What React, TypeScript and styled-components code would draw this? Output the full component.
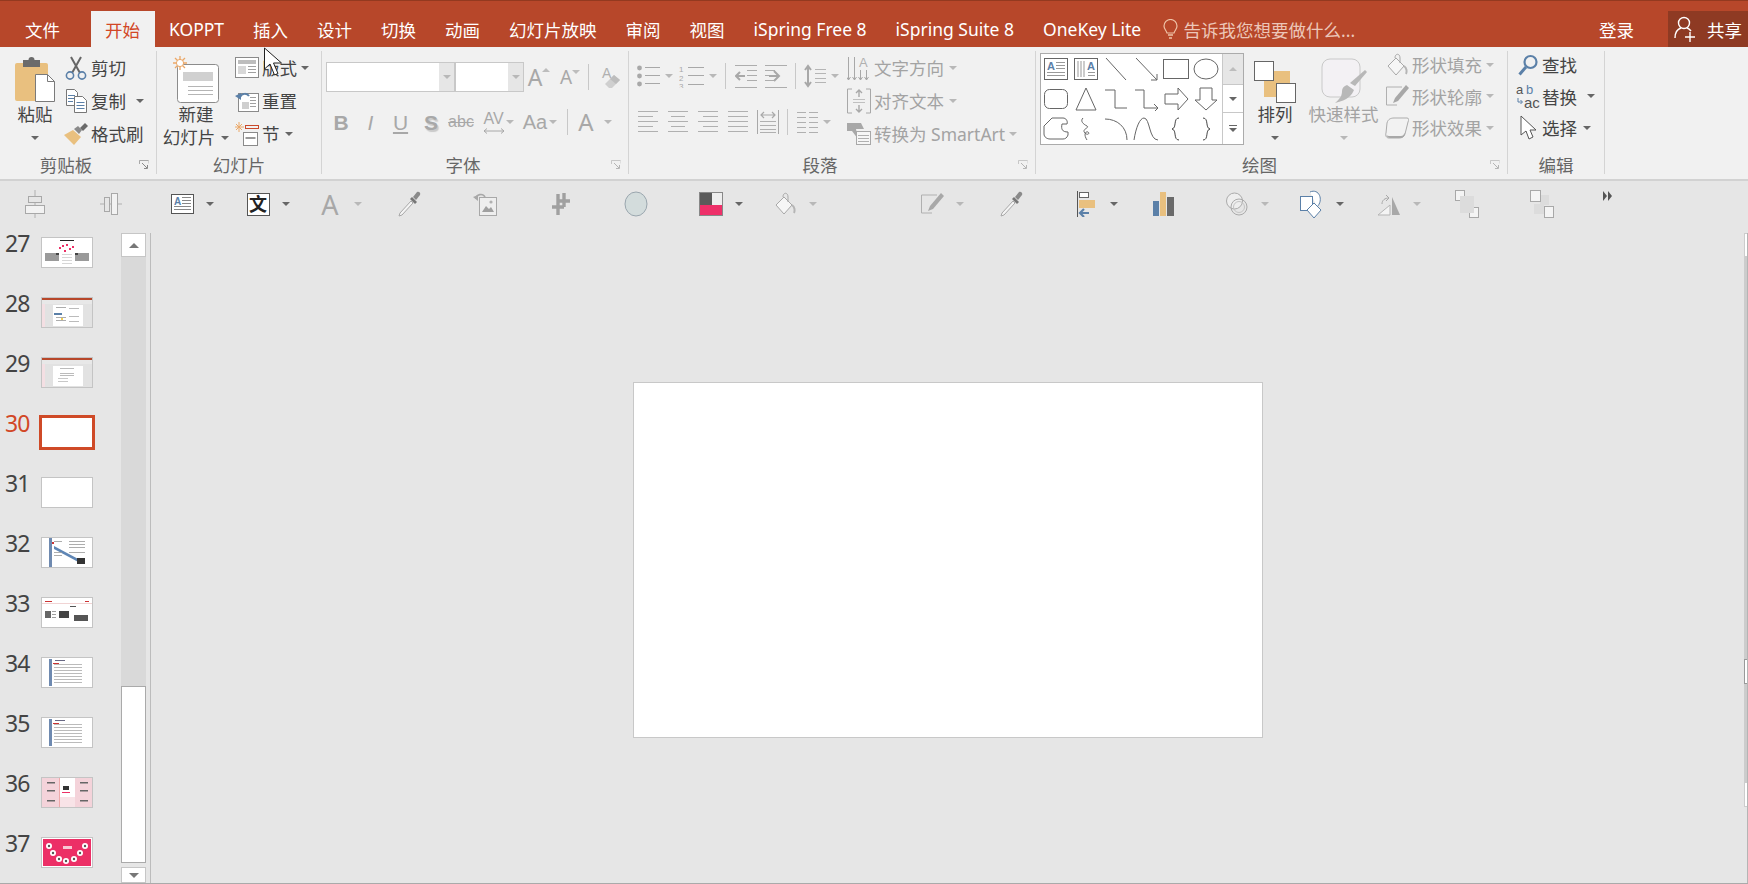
import React from "react";
import styled, { createGlobalStyle } from "styled-components";

const FONT = `"Noto Sans", "Noto Sans CJK SC", sans-serif`;
const G = "#b2b2b2";
const D = "#6a6a6a";
const B = "#5b80a8";
const Y = "#e9c07f";

const Global = createGlobalStyle`
  html, body { margin: 0; padding: 0; background: #e6e6e6; }
  * { box-sizing: border-box; }
  body { font-family: ${FONT}; }
`;

const Page = styled.div`
  position: relative; width: 1748px; height: 884px; overflow: hidden;
  display: flex; flex-direction: column; background: #e6e6e6;
  border-bottom: 1px solid #aaa;
`;
const TitleBar = styled.header`
  height: 47px; flex: none; display: flex; align-items: flex-end; padding-left: 10.5px;
  background: #b7472a; border-top: 1px solid #93391f; color: #fff; font-size: 17.5px;
`;
const Tab = styled.div<{ $active?: boolean; $mr?: number }>`
  height: 36px; padding: 0 14.5px; display: flex; align-items: center; white-space: nowrap;
  margin-right: ${(p) => p.$mr ?? 0}px;
  background: ${(p) => (p.$active ? "#f1f1f1" : "transparent")};
  color: ${(p) => (p.$active ? "#d24726" : "#fff")};
`;
const Search = styled.div`
  height: 36px; margin-left: 7px; display: flex; align-items: center; gap: 6px;
  color: #ecc6b8; white-space: nowrap;
`;
const Spacer = styled.div`flex: 1;`;
const Login = styled.div`height: 36px; display: flex; align-items: center; margin-right: 34px;`;
const Share = styled.div`
  width: 80px; height: 36px; background: #8e3a23; display: flex; align-items: center;
  padding-left: 6px; gap: 11px;
`;

const Ribbon = styled.section`
  height: 134px; flex: none; display: flex; padding: 4px 0 5px;
  background: #f1f1f1; border-bottom: 2px solid #d2d2d2;
  font-size: 17.5px; color: #444;
`;
const Group = styled.div<{ $w: number }>`
  width: ${(p) => p.$w}px; flex: none; display: flex; flex-direction: column;
  border-right: 1px solid #d4d4d4;
`;
const GroupBody = styled.div<{ $pl?: number }>`
  flex: 1; min-height: 0; display: flex; padding-left: ${(p) => p.$pl ?? 0}px;
`;
const GroupFooter = styled.div`
  height: 18px; flex: none; display: flex; align-items: center; color: #666; line-height: 18px;
`;
const GroupLabel = styled.div`flex: 1; text-align: center;`;
const Launcher = styled.div`width: 24px; display: flex; justify-content: center;`;

const BigButton = styled.div<{ $w: number; $ml?: number; $dim?: boolean }>`
  width: ${(p) => p.$w}px; margin-left: ${(p) => p.$ml ?? 0}px; flex: none;
  display: flex; flex-direction: column; align-items: center;
  color: ${(p) => (p.$dim ? "#a3a3a3" : "#444")};
`;
const BigIcon = styled.div`height: 52px; display: flex; align-items: flex-end; justify-content: center;`;
const BigLine = styled.div`
  height: 23px; line-height: 23px; display: flex; align-items: center; white-space: nowrap;
`;
const SmallCol = styled.div<{ $ml?: number; $mt?: number }>`
  display: flex; flex-direction: column; flex: none;
  margin-left: ${(p) => p.$ml ?? 0}px; margin-top: ${(p) => p.$mt ?? 0}px;
`;
const SmallRow = styled.div<{ $h?: number; $dim?: boolean }>`
  height: ${(p) => p.$h ?? 33}px; display: flex; align-items: center; white-space: nowrap;
  color: ${(p) => (p.$dim ? "#a3a3a3" : "#444")};
`;
const RowIcon = styled.span<{ $w?: number; $gap?: number }>`
  width: ${(p) => p.$w ?? 24}px; margin-right: ${(p) => p.$gap ?? 3}px; flex: none;
  display: flex; align-items: center; justify-content: center;
`;
const Caret = styled.span<{ $ml?: number; $dim?: boolean }>`
  display: inline-block; flex: none; width: 0; height: 0;
  margin-left: ${(p) => p.$ml ?? 0}px;
  border-left: 4px solid transparent; border-right: 4px solid transparent;
  border-top: 4.5px solid ${(p) => (p.$dim ? "#b8b8b8" : "#666")};
`;
const StackCol = styled.div<{ $w?: number }>`
  display: flex; flex-direction: column; flex: none; ${(p) => (p.$w ? `width:${p.$w}px;` : "")}
`;
const ToolRow = styled.div<{ $mt: number; $h?: number }>`
  margin-top: ${(p) => p.$mt}px; height: ${(p) => p.$h ?? 30}px;
  display: flex; align-items: center; flex: none; white-space: nowrap;
`;
const Spot = styled.span<{ $ml?: number; $w?: number }>`
  display: inline-flex; flex: none; align-items: center; justify-content: center;
  margin-left: ${(p) => p.$ml ?? 0}px; ${(p) => (p.$w ? `width:${p.$w}px;` : "")}
`;
const Sep = styled.span<{ $ml: number }>`
  width: 1px; height: 26px; background: #c8c8c8; flex: none; margin-left: ${(p) => p.$ml}px;
`;
const Combo = styled.div<{ $w: number; $ml?: number }>`
  width: ${(p) => p.$w}px; height: 30px; margin-left: ${(p) => p.$ml ?? 0}px; flex: none;
  display: flex; justify-content: flex-end; background: #fff; border: 1px solid #c8c8c8;
`;
const ComboArrow = styled.div`
  width: 15px; background: #e6e6e6; display: flex; align-items: center; justify-content: center;
`;
const Letter = styled.span<{ $size: number; $bold?: boolean; $italic?: boolean; $deco?: string; $shadow?: boolean; $font?: string }>`
  font-family: ${(p) => p.$font ?? `"Liberation Sans", sans-serif`};
  font-size: ${(p) => p.$size}px; line-height: 1; color: #a8a8a8;
  font-weight: ${(p) => (p.$bold ? 700 : 400)};
  font-style: ${(p) => (p.$italic ? "italic" : "normal")};
  text-decoration: ${(p) => p.$deco ?? "none"};
  ${(p) => (p.$shadow ? "text-shadow: 1.5px 1.5px 1px #c9c9c9;" : "")}
`;
const StackedLetter = styled.span`display: inline-flex; flex-direction: column; align-items: center; gap: 1px;`;

const Gallery = styled.div`
  margin-top: 2px; width: 204px; height: 92px; flex: none; display: flex;
  border: 1px solid #ababab; background: #fff;
`;
const GalleryGrid = styled.div`
  width: 181px; display: grid; padding: 0 0 0 0;
  grid-template-columns: repeat(6, 30px); grid-template-rows: repeat(3, 30px);
  justify-items: center; align-items: center;
`;
const GalleryScroll = styled.div`
  flex: 1; display: flex; flex-direction: column; border-left: 1px solid #c8c8c8;
`;
const GalleryBtn = styled.div<{ $on?: boolean; $h: number }>`
  height: ${(p) => p.$h}px; flex: none; display: flex; align-items: center; justify-content: center;
  background: ${(p) => (p.$on ? "#e6e6e6" : "#fff")}; border-bottom: 1px solid #c8c8c8;
  &:last-child { border-bottom: none; }
`;
const UpTri = styled.span`
  width: 0; height: 0; border-left: 4px solid transparent; border-right: 4px solid transparent;
  border-bottom: 4.5px solid #bdbdbd;
`;

const ToolBar = styled.div`
  height: 52px; flex: none; display: flex; align-items: center;
  padding: 0 0 6px 15px; background: #e6e6e6;
`;
const ToolSlot = styled.div<{ $w: number; $up?: boolean }>`
  width: ${(p) => p.$w}px; flex: none; display: flex; align-items: center;
  ${(p) => (p.$up ? "margin-top: -16px;" : "")}
`;
const ToolIcon = styled.div`width: 40px; flex: none; display: flex; justify-content: center; align-items: center;`;
const WenBox = styled.div`
  width: 23px; height: 23px; background: #fff; border: 1px solid #555; color: #222;
  display: flex; align-items: center; justify-content: center;
  font-size: 18px; font-weight: 700; line-height: 1;
`;

const Main = styled.main`flex: 1; min-height: 0; display: flex;`;
const ThumbPanel = styled.aside`
  width: 151px; flex: none; display: flex; border-right: 1px solid #bcbcbc;
`;
const ThumbList = styled.div`width: 121px; flex: none; overflow: hidden; padding-top: 4px;`;
const ThumbRow = styled.div`height: 60px; display: flex; align-items: flex-start;`;
const ThumbNum = styled.div<{ $active?: boolean }>`
  width: 41px; flex: none; padding-left: 5px; font-size: 23px; line-height: 24px;
  letter-spacing: -1px; margin-top: -6px;
  color: ${(p) => (p.$active ? "#d24726" : "#444")};
`;
const Thumb = styled.div<{ $active?: boolean }>`
  width: 52px; height: 31px; background: #fff; border: 1px solid #c4c4c4; overflow: hidden;
  ${(p) => (p.$active ? "outline: 3px solid #cf4a27; outline-offset: -1px;" : "")}
`;
const Scroll = styled.div`
  width: 25px; flex: none; display: flex; flex-direction: column; background: #d9d9d9;
`;
const ScrollBtn = styled.div<{ $h: number }>`
  height: ${(p) => p.$h}px; flex: none; background: #fff; border: 1px solid #c6c6c6;
  display: flex; align-items: center; justify-content: center;
`;
const ScrollTrack = styled.div`flex: 1;`;
const ScrollThumb = styled.div`height: 177px; flex: none; background: #fff; border: 1px solid #aaa;`;
const ScrollGap = styled.div`height: 4px; flex: none; background: #e6e6e6;`;
const TriUp = styled.span`
  width: 0; height: 0; border-left: 5.5px solid transparent; border-right: 5.5px solid transparent;
  border-bottom: 5.5px solid #777;
`;
const TriDown = styled.span`
  width: 0; height: 0; border-left: 5.5px solid transparent; border-right: 5.5px solid transparent;
  border-top: 5.5px solid #777;
`;
const Canvas = styled.div`
  flex: 1; display: flex; align-items: center; justify-content: center; padding-top: 4px;
`;
const Slide = styled.div`
  width: 630px; height: 356px; background: #fff; border: 1px solid #c8c8c8;
`;
const Rail = styled.div`
  width: 4px; flex: none; display: flex; flex-direction: column; border-right: 1px solid #b5b5b5;
`;
const RailBox = styled.div<{ $h: number; $dark?: boolean }>`
  height: ${(p) => p.$h}px; flex: none; background: #fff;
  border: 1px solid ${(p) => (p.$dark ? "#999" : "#ccc")}; border-right: none;
`;
const RailTrack = styled.div<{ $h?: number; $empty?: boolean }>`
  ${(p) => (p.$h ? `height:${p.$h}px;` : "flex:1;")}
  background: ${(p) => (p.$empty ? "transparent" : "#ccc")};
`;
const Cursor = styled.svg`position: absolute; left: 263px; top: 47px; z-index: 5;`;

/* ---------- icons ---------- */
type SP = { w: number; h: number; children: React.ReactNode; vb?: string };
const Svg = ({ w, h, children, vb }: SP) => (
  <svg width={w} height={h} viewBox={vb ?? `0 0 ${w} ${h}`} fill="none" style={{ display: "block", flex: "none" }}>
    {children}
  </svg>
);
const lines = (x1: number, x2: number, ys: number[], c: string, sw = 1) =>
  ys.map((y) => <line key={`${x1}-${y}`} x1={x1} x2={x2} y1={y + 0.5} y2={y + 0.5} stroke={c} strokeWidth={sw} />);

const Launch = ({ c = "#8a8a8a" }: { c?: string }) => (
  <Svg w={10} h={10}>
    <path d="M0.5 4V.5H9.5" stroke={c} transform="translate(0 0)" opacity=".7" />
    <path d="M3 3l5 5M5 8.5h3.5V5" stroke={c} />
    <path d="M9.5 .5v3" stroke={c} opacity=".3" />
  </Svg>
);
const Paste = () => (
  <Svg w={42} h={46}>
    <rect x="1" y="6" width="33" height="38" rx="2" fill={Y} />
    <rect x="9" y="3" width="17" height="7" fill="#6b6b6b" />
    <circle cx="17.5" cy="3" r="3" fill="#6b6b6b" />
    <path d="M21.5 17.5h12l7 7v20h-19z" fill="#fff" stroke="#7a7a7a" />
    <path d="M33.5 17.5v7h7" stroke="#7a7a7a" />
  </Svg>
);
const Scissors = () => (
  <Svg w={22} h={24}>
    <path d="M6 1l9 16M16 1L7 17" stroke="#666" strokeWidth="2" />
    <circle cx="5" cy="19.5" r="3.6" stroke={B} strokeWidth="1.6" />
    <circle cx="17" cy="19.5" r="3.6" stroke={B} strokeWidth="1.6" />
  </Svg>
);
const Copy = () => (
  <Svg w={22} h={24}>
    <path d="M1.5.5h8l3 3v13h-11z" fill="#fff" stroke="#777" />
    <path d="M3 6.5h7M3 9.5h7M3 12.5h5" stroke={B} />
    <path d="M9.5 7.5h8l4 4v12h-12z" fill="#fff" stroke="#777" />
    <path d="M11.5 13.5h8M11.5 16.5h8M11.5 19.5h8" stroke={B} />
  </Svg>
);
const Painter = () => (
  <Svg w={24} h={22}>
    <path d="M0 12l9-5 8 7-7 8z" fill={Y} />
    <path d="M11 6l4-3 4 4-3 4z" fill="#8a8a8a" transform="translate(-1 0)" />
    <path d="M16 5l5-5 3 3-5 5z" fill="#6a6a6a" />
  </Svg>
);
const NewSlide = () => (
  <Svg w={48} h={48}>
    <rect x="5.5" y="9.5" width="41" height="38" rx="3" fill="#fff" stroke="#8c8c8c" />
    <rect x="11" y="17" width="30" height="9" fill="#d0d0d0" />
    {lines(16, 41, [31, 35, 39], "#b5b5b5")}
    <path d="M8 1v14M1 8h14M3 3l10 10M13 3L3 13" stroke="#eba868" strokeWidth="1.3" />
    <circle cx="8" cy="8" r="3.6" fill="#fff" stroke="#eba868" />
  </Svg>
);
const Layout = () => (
  <Svg w={24} h={21}>
    <rect x=".5" y=".5" width="23" height="20" fill="#fff" stroke="#8a8a8a" />
    <rect x="3" y="3" width="18" height="4" fill="#bdbdbd" />
    <rect x="3" y="9" width="8" height="8" fill="#d8d8d8" />
    {lines(13, 21, [9, 12, 15], "#a0a0a0")}
  </Svg>
);
const Reset = () => (
  <Svg w={24} h={22}>
    <rect x="3.5" y="3.5" width="20" height="18" fill="#fff" stroke="#8a8a8a" />
    <rect x="7" y="12" width="7" height="7" fill="#cfcfcf" />
    {lines(15, 21, [7, 10, 13, 16], "#a0a0a0")}
    <path d="M5 7c2-4 7-4 9-1" stroke={B} strokeWidth="2" />
    <path d="M0 6l6-3v7z" fill={B} />
  </Svg>
);
const Section = () => (
  <Svg w={24} h={24}>
    <path d="M4 0v10M0 5h9M1 2l6 6M7 2L1 8" stroke="#eba868" />
    <rect x="10.5" y="3.5" width="13" height="3" stroke="#c9492b" />
    <rect x="8.5" y="10.5" width="14" height="13" fill="#fff" stroke="#8a8a8a" />
    <rect x="10.5" y="15" width="10" height="2" fill="#999" />
  </Svg>
);
const Up = ({ c = "#bdbdbd" }: { c?: string }) => (
  <Svg w={8} h={4}><path d="M0 4l4-4 4 4z" fill={c} /></Svg>
);
const GrowA = ({ s, down }: { s: number; down?: boolean }) => (
  <Spot $w={20}>
    <Letter $size={s} $font={FONT}>A</Letter>
    <span style={{ alignSelf: "flex-start", marginTop: 2, transform: down ? "scaleY(-1)" : "none" }}><Up /></span>
  </Spot>
);
const Eraser = () => (
  <Svg w={20} h={24}>
    <text x="1" y="13" fontSize="14" fill="#b0b0b0" fontFamily="Liberation Sans">A</text>
    <path d="M4 19l9-9 6 5-8 8H8z" fill="#cfcfcf" />
    <path d="M13 10l6 5-4 4-6-5z" fill="#bdbdbd" />
  </Svg>
);
const AVArrow = () => (
  <Svg w={22} h={6}><path d="M1 3h20M4 .5L1 3l3 2.5M18 .5L21 3l-3 2.5" stroke="#a8a8a8" /></Svg>
);
const Bullets = () => (
  <Svg w={23} h={22}>
    {[3, 11, 19].map((y) => <circle key={y} cx="2.5" cy={y} r="2.4" fill="#a8a8a8" />)}
    {lines(8, 23, [2, 10, 18], "#a8a8a8")}
  </Svg>
);
const Numbers = () => (
  <Svg w={25} h={24}>
    {["1", "2", "3"].map((t, i) => (
      <text key={t} x="0" y={8 + i * 8.5} fontSize="8" fill="#a8a8a8" fontFamily="Liberation Sans">{t}</text>
    ))}
    {lines(9, 25, [3, 11, 20], "#a8a8a8")}
  </Svg>
);
const Indent = ({ flip }: { flip?: boolean }) => (
  <Svg w={22} h={24}>
    {lines(0, 22, [1, 23], "#adadad")}
    {lines(flip ? 0 : 12, flip ? 10 : 22, [6, 11, 16], "#adadad")}
    {flip
      ? <path d="M11 12h-0M22 12H12M17 7l5 5-5 5" stroke="#a8a8a8" strokeWidth="2" transform="translate(-8 0)" />
      : <path d="M10 12H1M5 8l-4 4 4 4" stroke="#a8a8a8" strokeWidth="2" />}
  </Svg>
);
const Spacing = () => (
  <Svg w={22} h={24}>
    <path d="M4 2v20M1 6l3-4 3 4M1 18l3 4 3-4" stroke="#a8a8a8" strokeWidth="2" />
    {lines(11, 22, [5, 9, 14, 18], "#b5b5b5")}
  </Svg>
);
const Align = ({ k }: { k: number }) => {
  const long = [0, 20];
  const short = k === 0 ? [0, 15] : k === 1 ? [3, 17] : k === 2 ? [5, 20] : [0, 20];
  return (
    <Svg w={20} h={22}>
      {[1, 6, 11, 16, 21].map((y, i) => {
        const r = i % 2 ? short : long;
        return <line key={y} x1={r[0]} x2={r[1]} y1={y - 0.5} y2={y - 0.5} stroke="#b0b0b0" />;
      })}
    </Svg>
  );
};
const Distribute = () => (
  <Svg w={22} h={24}>
    <path d="M.5 0v24M21.5 0v24" stroke="#a8a8a8" />
    <path d="M4 5h14M7 2L4 5l3 3M15 2l3 3-3 3" stroke="#a8a8a8" strokeWidth="1.2" />
    {lines(3, 19, [11, 15, 19, 22], "#b0b0b0")}
  </Svg>
);
const Columns = () => (
  <Svg w={21} h={22}>
    {lines(0, 9, [1, 6, 11, 16, 21], "#b0b0b0")}
    {lines(12, 21, [1, 6, 11, 16, 21], "#b0b0b0")}
  </Svg>
);
const TextDir = () => (
  <Svg w={24} h={26}>
    {[1, 7, 13, 19].map((x) => <path key={x} d={`M${x + 0.5} ${x > 10 ? 15 : 2}V25M${x - 1.5} 22l2 3 2-3`} stroke="#a8a8a8" />)}
    <text x="12" y="12" fontSize="13" fill="#b0b0b0" fontFamily="Liberation Sans">A</text>
  </Svg>
);
const TextAlign = () => (
  <Svg w={24} h={26}>
    <path d="M5 1H.5v24H5M19 1h4.5v24H19" stroke="#a8a8a8" />
    <path d="M12 2v7M9 5l3-3 3 3M12 17v7M9 21l3 3 3-3" stroke="#a8a8a8" strokeWidth="1.4" />
    {lines(6, 18, [11, 14], "#c0c0c0")}
  </Svg>
);
const SmartArtIco = () => (
  <Svg w={24} h={22}>
    <path d="M0 0h14l3 6H9l2 10-6-8H0z" fill="#a8a8a8" />
    <rect x="9.5" y="8.5" width="14" height="13" fill="#f6f6f6" stroke="#a8a8a8" />
    {lines(11, 22, [12, 15, 18], "#b0b0b0")}
  </Svg>
);

const shapeProps = { stroke: "#666", strokeWidth: 1, fill: "none" as const };
const TextShape = ({ v }: { v?: boolean }) => (
  <Svg w={24} h={22}>
    <rect x=".5" y=".5" width="23" height="21" fill="#fff" stroke="#666" />
    {v
      ? <>
          {[4, 7, 10].map((x) => <line key={x} x1={x} x2={x} y1="3" y2="19" stroke="#999" />)}
          <text x="13" y="12" fontSize="11" fontWeight="700" fill={B} fontFamily="Liberation Sans">A</text>
          {lines(14, 21, [14, 17], "#999")}
        </>
      : <>
          <text x="3" y="12" fontSize="11" fontWeight="700" fill={B} fontFamily="Liberation Sans">A</text>
          {lines(12, 21, [4, 7, 10], "#999")}
          {lines(3, 21, [14, 17], "#999")}
        </>}
  </Svg>
);
const S26 = ({ children }: { children: React.ReactNode }) => <Svg w={26} h={24}>{children}</Svg>;
const shapes: React.ReactNode[] = [
  <TextShape key="a" />,
  <TextShape key="b" v />,
  <S26 key="c"><path d="M3 1l20 22" {...shapeProps} /></S26>,
  <S26 key="d"><path d="M3 1l21 22M24 17v6h-6" {...shapeProps} /></S26>,
  <S26 key="e"><rect x=".5" y="2.5" width="25" height="19" {...shapeProps} /></S26>,
  <S26 key="f"><ellipse cx="13" cy="12" rx="12" ry="10" {...shapeProps} /></S26>,
  <S26 key="g"><rect x="1.5" y="2.5" width="23" height="19" rx="5" {...shapeProps} /></S26>,
  <S26 key="h"><path d="M13 1L3 23h20z" {...shapeProps} /></S26>,
  <S26 key="i"><path d="M2 3h10v18h12" {...shapeProps} /></S26>,
  <S26 key="j"><path d="M2 3h9v18h14M21 17l4 4-4 4" {...shapeProps} /></S26>,
  <S26 key="k"><path d="M2 7h13V1l10 11-10 11v-6H2z" {...shapeProps} transform="translate(0 0)" /></S26>,
  <S26 key="l"><path d="M7 1h12v12h5L13 23 2 13h5z" {...shapeProps} /></S26>,
  <S26 key="m"><path d="M1 9l8-8h11c3 0 5 3 4 6h-5c-1 5 0 8 6 8v3c-1 3-3 4-5 4H7c-3 0-6-2-6-5z" {...shapeProps} /></S26>,
  <S26 key="n"><path d="M10 1c-3 3 0 6 4 8 3 2-6 3-2 7 3 3 5 0 3-1-2-1-5 2-1 8" {...shapeProps} /></S26>,
  <S26 key="o"><path d="M2 2c12 0 22 8 22 21" {...shapeProps} /></S26>,
  <S26 key="p"><path d="M1 23C3 10 7 1 11 1c6 0 5 22 14 22" {...shapeProps} /></S26>,
  <S26 key="q"><path d="M16 1c-6 0-2 10-7 11 5 1 1 11 7 11" {...shapeProps} stroke="#444" /></S26>,
  <S26 key="r"><path d="M10 1c6 0 2 10 7 11-5 1-1 11-7 11" {...shapeProps} stroke="#444" /></S26>,
];
const Arrange = () => (
  <Svg w={42} h={42}>
    <rect x="11" y="11" width="26" height="26" fill={Y} transform="translate(-1 -1)" />
    <rect x=".5" y=".5" width="19" height="19" fill="#fff" stroke="#666" />
    <rect x="22.5" y="22.5" width="19" height="19" fill="#fff" stroke="#666" />
  </Svg>
);
const QuickStyle = () => (
  <Svg w={46} h={45}>
    <rect x="1" y="1" width="38" height="38" rx="8" fill="#f3f1f4" stroke="#c9c9c9" />
    <path d="M44 12l2 2-12 14-5-3z" fill="#b8b8b8" />
    <path d="M26 27l7 5c-2 5-6 10-19 13 6-5 7-8 7-12 0-3 2-5 5-6z" fill="#b8b8b8" />
  </Svg>
);
const Bucket = ({ s = 24 }: { s?: number }) => (
  <Svg w={s} h={s} vb="0 0 24 24">
    <path d="M3 13l8-8 8 8-8 9z" fill="#f6f6f6" stroke="#a8a8a8" />
    <path d="M10 5c0-5 5-5 5 0v5" stroke="#a8a8a8" />
    <path d="M19 13c3 2 3 6 2 8" stroke="#b5b5b5" strokeWidth="2" />
  </Svg>
);
const PenBox = ({ s = 24 }: { s?: number }) => (
  <Svg w={s} h={s} vb="0 0 24 24">
    <path d="M17 3H1.5v18H12" stroke="#b0b0b0" />
    <path d="M21 1l3 3-11 13-5 2 2-5z" fill="#a8a8a8" />
  </Svg>
);
const EffectIco = () => (
  <Svg w={24} h={22}>
    <path d="M2 6C3 2 6 1 9 1h13c2 0 2 2 1 4l-3 12c-1 3-3 4-6 4H4c-3 0-4-3-3-5z" fill="#f2f2f2" stroke="#ababab" />
    <path d="M1 16c0 3 2 5 5 5h9c3 0 5-2 5-5l-1 1c-1 2-2 2-5 2H4c-2 0-3-1-3-3z" fill="#a8a8a8" />
  </Svg>
);
const Find = () => (
  <Svg w={20} h={22}>
    <circle cx="12.5" cy="8" r="6" stroke={B} strokeWidth="2.2" />
    <path d="M8 13l-6.5 7.5" stroke={B} strokeWidth="3" />
  </Svg>
);
const Replace = () => (
  <Svg w={24} h={26}>
    <text x="0" y="11" fontSize="13" fill="#555" fontFamily="Liberation Sans">a</text>
    <text x="10" y="11" fontSize="13" fill={B} fontFamily="Liberation Sans">b</text>
    <text x="8" y="25" fontSize="15" fill="#555" fontFamily="Liberation Sans">ac</text>
    <path d="M2 15v4h4M4.5 17l2 2-2 2" stroke={B} />
  </Svg>
);
const Select = () => (
  <Svg w={16} h={26}>
    <path d="M1 1v19l5-4 3 8 4-2-3-7h6z" fill="#fff" stroke="#555" />
  </Svg>
);
const AlignMid = () => (
  <Svg w={20} h={28}>
    <path d="M10 0v28" stroke="#b0b0b0" />
    <rect x="3.5" y="6.5" width="13" height="6" fill="#e6e6e6" stroke="#a8a8a8" />
    <rect x=".5" y="15.5" width="19" height="8" fill="#f2f2f2" stroke="#a8a8a8" />
  </Svg>
);
const AlignCol = () => (
  <Svg w={22} h={22}>
    <path d="M0 11h22" stroke="#b0b0b0" />
    <rect x="4.5" y="4.5" width="5" height="14" fill="#e6e6e6" stroke="#a8a8a8" />
    <rect x="11.5" y=".5" width="6" height="21" fill="#f2f2f2" stroke="#a8a8a8" />
  </Svg>
);
const TextBoxIco = () => (
  <Svg w={23} h={20}>
    <rect x=".5" y=".5" width="22" height="19" fill="#fff" stroke="#555" />
    <text x="3" y="11" fontSize="10" fontWeight="700" fill={B} fontFamily="Liberation Sans">A</text>
    {lines(11, 20, [3, 6, 9], "#888")}
    {lines(3, 20, [12, 15], "#888")}
  </Svg>
);
const Dropper = () => (
  <Svg w={24} h={26}>
    <path d="M3 22l-1 3 3-1L16 12l-2-2z" fill="#f4f4f4" stroke="#a8a8a8" />
    <path d="M13 8l5 5 2-2-5-5z" fill="#777" />
    <path d="M16 6l4-5c2-1 4 1 3 3l-4 5z" fill="#8a8a8a" />
  </Svg>
);
const PicChange = () => (
  <Svg w={24} h={24}>
    <rect x="6.5" y="5.5" width="17" height="18" fill="#eee" stroke="#a8a8a8" />
    <path d="M9 20l4-6 3 3 2-2 3 5z" fill="#a0a0a0" />
    <circle cx="18" cy="10" r="1.6" fill="#b0b0b0" />
    <path d="M3 7c0-5 7-6 9-2" stroke="#a8a8a8" strokeWidth="1.6" />
    <path d="M0 5l5-2v6z" fill="#a8a8a8" />
  </Svg>
);
const CropIco = () => (
  <Svg w={18} h={22}>
    <path d="M6 1v21M0 14h12M12 0v14M6 8h12" stroke="#a0a0a0" strokeWidth="3.4" />
  </Svg>
);
const Ell = () => (
  <Svg w={24} h={26}><ellipse cx="12" cy="13" rx="11" ry="12" fill="#d3dcdc" stroke="#9aa6ae" /></Svg>
);
const ColorSquare = () => (
  <Svg w={24} h={24}>
    <rect x="1" y="1" width="12" height="12" fill="#5a5a5a" />
    <rect x="13" y="1" width="10" height="12" fill="#eee" />
    <rect x="1" y="13" width="22" height="10" fill="#ee3069" />
    <rect x=".5" y=".5" width="23" height="23" stroke="#888" />
  </Svg>
);
const ArrangeBar = () => (
  <Svg w={18} h={26}>
    <path d="M.5 0v26" stroke="#555" />
    <rect x="2.5" y="1.5" width="9" height="5" fill="#fff" stroke="#666" />
    <rect x="2" y="9" width="16" height="8" fill={Y} />
    <path d="M12 22H3M7 18l-4 4 4 4" stroke={B} strokeWidth="2.2" />
  </Svg>
);
const Bars = () => (
  <Svg w={21} h={24}>
    <rect x="0" y="9" width="6" height="15" fill={B} />
    <rect x="7" y="0" width="6" height="24" fill={Y} />
    <rect x="14" y="5" width="7" height="19" fill="#6a6a6a" />
  </Svg>
);
const Circles = () => (
  <Svg w={22} h={26}>
    <circle cx="8.5" cy="10" r="8" fill="#eee" stroke="#aaa" />
    <circle cx="13" cy="16" r="8" fill="none" stroke="#aaa" />
    <circle cx="13" cy="16" r="5.5" stroke="#c4c4c4" />
  </Svg>
);
const EditShapes = () => (
  <Svg w={24} h={28}>
    <path d="M10 2c9-4 14 8 7 15" fill="#fff" stroke={B} />
    <rect x=".5" y="6.5" width="12" height="14" fill="#fff" stroke={B} />
    <path d="M14 13l7 7-7 8-7-8z" fill="#fff" stroke={B} />
  </Svg>
);
const RotateIco = () => (
  <Svg w={24} h={24}>
    <path d="M1 23l12-10v10z" fill="#f4f4f4" stroke="#b5b5b5" />
    <path d="M15 5l8 18h-8z" fill="#a8a8a8" />
    <path d="M5 12c0-4 3-6 7-6M9 3l3 3-3 3" stroke="#a8a8a8" />
  </Svg>
);
const Back = () => (
  <Svg w={24} h={28}>
    <rect x=".5" y=".5" width="9" height="10" fill="#f4f4f4" stroke="#a8a8a8" />
    <rect x="14.5" y="17.5" width="9" height="10" fill="#f4f4f4" stroke="#a8a8a8" />
    <rect x="5" y="6" width="14" height="17" fill="#dcdcdc" />
  </Svg>
);
const Forward = () => (
  <Svg w={24} h={28}>
    <rect x="10" y="5" width="9" height="10" fill="#dcdcdc" />
    <rect x="4" y="14" width="10" height="10" fill="#dcdcdc" />
    <rect x=".5" y=".5" width="10" height="11" fill="#f4f4f4" stroke="#a8a8a8" />
    <rect x="14.5" y="16.5" width="9" height="11" fill="#f4f4f4" stroke="#a8a8a8" />
  </Svg>
);
const More = () => (
  <Svg w={9} h={10}><path d="M0 0l4 5-4 5zM5 0l4 5-4 5z" fill="#555" /></Svg>
);
const Bulb = () => (
  <Svg w={15} h={20}>
    <path d="M4 14C3 11 1 10 1 7a6.5 6.5 0 0 1 13 0c0 3-2 4-3 7z" stroke="#efc3a8" strokeWidth="1.2" />
    <path d="M5 16h5M6 19h3" stroke="#efc3a8" strokeWidth="1.3" />
  </Svg>
);
const UserPlus = () => (
  <Svg w={22} h={26}>
    <circle cx="10" cy="7" r="5.5" stroke="#fff" strokeWidth="1.4" />
    <path d="M1 22c0-6 3-9 6-10M13 12c2 .5 3 1.5 4 3" stroke="#fff" strokeWidth="1.4" />
    <path d="M16 16v10M11 21h10" stroke="#fff" strokeWidth="1.4" />
  </Svg>
);

/* ---------- thumbnails ---------- */
const ThumbSvg = ({ children }: { children?: React.ReactNode }) => (
  <svg width="50" height="29" viewBox="0 0 50 29" style={{ display: "block" }}>{children}</svg>
);
const txt = (x: number, w: number, ys: number[], c = "#999") =>
  ys.map((y) => <rect key={`${x}${y}`} x={x} y={y} width={w} height="0.8" fill={c} />);
const shot = (body: React.ReactNode) => (
  <ThumbSvg>
    <rect width="50" height="2" fill="#b7472a" />
    <rect y="2" width="50" height="4" fill="#e8e8e8" />
    <rect y="6" width="50" height="23" fill="#e2e2e2" />
    <rect x="0" y="6" width="3" height="23" fill="#f4dfe3" />
    {body}
  </ThumbSvg>
);
const doc = (
  <ThumbSvg>
    <rect x="7" y="1" width="3" height="27" fill="#6f8ab0" />
    {txt(13, 10, [2], "#446")}
    {txt(12, 28, [6, 9, 12, 15, 18, 21, 24], "#aaa")}
    <rect x="11" y="5" width="6" height="1" fill="#c33" />
  </ThumbSvg>
);
const thumbs: { n: number; active?: boolean; art: React.ReactNode }[] = [
  { n: 27, art: (
    <ThumbSvg>
      <rect x="18" y="2" width="14" height="1" fill="#222" />
      {[[17, 9], [24, 6], [27, 10], [30, 8], [22, 12], [20, 7]].map(([x, y]) => <rect key={`${x}${y}`} x={x} y={y} width="2" height="2" fill="#ec2f66" />)}
      <rect x="3" y="15" width="14" height="8" fill="#9a9a9a" />
      <rect x="33" y="15" width="14" height="8" fill="#9a9a9a" />
      <rect x="14" y="15" width="3" height="2" fill="#444" />
      <rect x="33" y="15" width="3" height="2" fill="#444" />
      {txt(20, 10, [16, 19, 22, 25], "#ccc")}
    </ThumbSvg>
  ) },
  { n: 28, art: shot(<>
    <rect x="11" y="7" width="30" height="21" fill="#fff" />
    <rect x="12" y="15" width="8" height="2" fill="#5b80a8" />
    {txt(14, 10, [9, 19, 22], "#999")}{txt(27, 10, [10, 18, 23], "#aaa")}
    <rect x="19" y="20" width="2" height="2" fill="#ec5" />
  </>) },
  { n: 29, art: shot(<>
    <rect x="11" y="8" width="30" height="20" fill="#fff" />
    {txt(18, 14, [10, 15, 17], "#aaa")}{txt(16, 10, [20, 23], "#bbb")}
  </>) },
  { n: 30, active: true, art: null },
  { n: 31, art: null },
  { n: 32, art: (
    <ThumbSvg>
      <rect x="7" y="0" width="3" height="29" fill="#6f8ab0" />
      <path d="M12 8l28 15v3L12 11z" fill="#5f86b5" />
      <rect x="35" y="20" width="8" height="6" fill="#333" />
      {txt(27, 16, [3, 6, 9, 14], "#999")}{txt(12, 8, [3, 14, 17], "#999")}
      <rect x="10" y="4" width="2" height="2" fill="#c33" />
    </ThumbSvg>
  ) },
  { n: 33, art: (
    <ThumbSvg>
      <rect x="3" y="3" width="7" height="1" fill="#c33" />
      <rect x="43" y="3" width="4" height="1" fill="#c33" />
      <rect x="0" y="5" width="50" height=".5" fill="#e3a9a9" />
      <rect x="28" y="8" width="6" height="1" fill="#555" />
      <rect x="3" y="13" width="6" height="7" fill="#666" />
      <rect x="17" y="13" width="10" height="7" fill="#444" />
      <rect x="32" y="17" width="14" height="6" fill="#555" />
      {txt(10, 4, [13, 16, 19], "#888")}
    </ThumbSvg>
  ) },
  { n: 34, art: doc },
  { n: 35, art: doc },
  { n: 36, art: (
    <ThumbSvg>
      <rect width="18" height="29" fill="#f4d3da" />
      <rect x="33" width="17" height="29" fill="#f4d3da" />
      <rect x="18" y="19" width="15" height="10" fill="#f8e3e7" />
      {[2, 10, 20].map((y) => <rect key={y} x="5" y={y + 2} width="8" height="1.5" fill="#666" />)}
      {[2, 10, 20].map((y) => <rect key={y} x="38" y={y + 2} width="8" height="1.5" fill="#666" />)}
      <rect x="21" y="8" width="6" height="4" fill="#333" />
      <rect x="20" y="14" width="8" height="1" fill="#ec2f66" />
      <rect x="17" y="0" width="1" height="29" fill="#eaa" />
    </ThumbSvg>
  ) },
  { n: 37, art: (
    <ThumbSvg>
      <rect x="1" y="1" width="48" height="27" fill="#ec2f66" />
      {[[7, 8], [11, 15], [17, 21], [24, 23], [32, 21], [38, 15], [43, 8]].map(([x, y]) => (
        <g key={x}><circle cx={x} cy={y} r="3" fill="#fff" /><circle cx={x} cy={y} r="1.2" fill="#555" /></g>
      ))}
      <rect x="21" y="8" width="9" height="3" fill="#f9c6d4" />
    </ThumbSvg>
  ) },
];

const tools: { x: number; icon: React.ReactNode; caret?: "on" | "dim"; up?: boolean }[] = [
  { x: 35, icon: <AlignMid /> },
  { x: 111, icon: <AlignCol /> },
  { x: 182, icon: <TextBoxIco />, caret: "on" },
  { x: 258, icon: <WenBox>文</WenBox>, caret: "on" },
  { x: 330, icon: <Letter $size={27} $font={FONT}>A</Letter>, caret: "dim" },
  { x: 409, icon: <Dropper /> },
  { x: 485, icon: <PicChange /> },
  { x: 561, icon: <CropIco /> },
  { x: 636, icon: <Ell /> },
  { x: 711, icon: <ColorSquare />, caret: "on" },
  { x: 785, icon: <Bucket />, caret: "dim" },
  { x: 932, icon: <PenBox />, caret: "dim" },
  { x: 1011, icon: <Dropper /> },
  { x: 1086, icon: <ArrangeBar />, caret: "on" },
  { x: 1163, icon: <Bars /> },
  { x: 1237, icon: <Circles />, caret: "dim" },
  { x: 1312, icon: <EditShapes />, caret: "on" },
  { x: 1389, icon: <RotateIco />, caret: "dim" },
  { x: 1467, icon: <Back /> },
  { x: 1542, icon: <Forward /> },
  { x: 1607, icon: <More />, up: true },
];

const tabs = ["KOPPT", "插入", "设计", "切换", "动画", "幻灯片放映", "审阅", "视图", "iSpring Free 8", "iSpring Suite 8", "OneKey Lite"];

export default function App() {
  return (
    <Page>
      <Global />
      <TitleBar>
        <Tab $mr={16}>文件</Tab>
        <Tab $active>开始</Tab>
        {tabs.map((t) => <Tab key={t}>{t}</Tab>)}
        <Search><Bulb />告诉我您想要做什么...</Search>
        <Spacer />
        <Login>登录</Login>
        <Share><UserPlus />共享</Share>
      </TitleBar>

      <Ribbon>
        <Group $w={157}>
          <GroupBody $pl={14}>
            <BigButton $w={42}>
              <BigIcon><Paste /></BigIcon>
              <BigLine>粘贴</BigLine>
              <BigLine><Caret /></BigLine>
            </BigButton>
            <SmallCol $ml={8}>
              <SmallRow><RowIcon><Scissors /></RowIcon>剪切</SmallRow>
              <SmallRow><RowIcon><Copy /></RowIcon>复制<Caret $ml={10} /></SmallRow>
              <SmallRow><RowIcon><Painter /></RowIcon>格式刷</SmallRow>
            </SmallCol>
          </GroupBody>
          <GroupFooter><GroupLabel>剪贴板</GroupLabel><Launcher><Launch /></Launcher></GroupFooter>
        </Group>

        <Group $w={165}>
          <GroupBody>
            <BigButton $w={76} $ml={1}>
              <BigIcon><NewSlide /></BigIcon>
              <BigLine>新建</BigLine>
              <BigLine>幻灯片<Caret $ml={6} /></BigLine>
            </BigButton>
            <SmallCol $ml={1}>
              <SmallRow><RowIcon><Layout /></RowIcon>版式<Caret $ml={4} /></SmallRow>
              <SmallRow><RowIcon><Reset /></RowIcon>重置</SmallRow>
              <SmallRow><RowIcon><Section /></RowIcon>节<Caret $ml={5} /></SmallRow>
            </SmallCol>
          </GroupBody>
          <GroupFooter><GroupLabel>幻灯片</GroupLabel></GroupFooter>
        </Group>

        <Group $w={307}>
          <GroupBody $pl={4}>
            <StackCol>
              <ToolRow $mt={11}>
                <Combo $w={129}><ComboArrow><Caret $dim /></ComboArrow></Combo>
                <Combo $w={69}><ComboArrow><Caret $dim /></ComboArrow></Combo>
                <Spot $ml={5}><GrowA s={23} /></Spot>
                <Spot $ml={11}><GrowA s={19} down /></Spot>
                <Sep $ml={8} />
                <Spot $ml={12}><Eraser /></Spot>
              </ToolRow>
              <ToolRow $mt={15}>
                <Spot $ml={8} $w={14}><Letter $size={21} $bold>B</Letter></Spot>
                <Spot $ml={17} $w={11}><Letter $size={21} $italic>I</Letter></Spot>
                <Spot $ml={17} $w={15}><Letter $size={21} $deco="underline">U</Letter></Spot>
                <Spot $ml={16} $w={14}><Letter $size={21} $bold $shadow>S</Letter></Spot>
                <Spot $ml={11} $w={24}><Letter $size={16} $deco="line-through">abc</Letter></Spot>
                <Spot $ml={8} $w={25}>
                  <StackedLetter><Letter $size={16}>AV</Letter><AVArrow /></StackedLetter>
                </Spot>
                <Caret $dim />
                <Spot $ml={9} $w={24}><Letter $size={20}>Aa</Letter></Spot>
                <Caret $dim $ml={2} />
                <Sep $ml={10} />
                <Spot $ml={10} $w={16}><Letter $size={24} $font={FONT}>A</Letter></Spot>
                <Caret $dim $ml={10} />
              </ToolRow>
            </StackCol>
          </GroupBody>
          <GroupFooter><GroupLabel>字体</GroupLabel><Launcher><Launch c="#b5b5b5" /></Launcher></GroupFooter>
        </Group>

        <Group $w={407}>
          <GroupBody $pl={8}>
            <StackCol $w={207}>
              <ToolRow $mt={10}>
                <Spot $w={23}><Bullets /></Spot>
                <Caret $dim $ml={5} />
                <Spot $ml={6} $w={25}><Numbers /></Spot>
                <Caret $dim $ml={5} />
                <Sep $ml={8} />
                <Spot $ml={9} $w={22}><Indent /></Spot>
                <Spot $ml={8} $w={22}><Indent flip /></Spot>
                <Sep $ml={8} />
                <Spot $ml={8} $w={22}><Spacing /></Spot>
                <Caret $dim $ml={5} />
              </ToolRow>
              <ToolRow $mt={16}>
                <Spot $ml={1} $w={20}><Align k={0} /></Spot>
                <Spot $ml={10} $w={20}><Align k={1} /></Spot>
                <Spot $ml={10} $w={20}><Align k={2} /></Spot>
                <Spot $ml={10} $w={20}><Align k={3} /></Spot>
                <Spot $ml={9} $w={22}><Distribute /></Spot>
                <Sep $ml={8} />
                <Spot $ml={9} $w={21}><Columns /></Spot>
                <Caret $dim $ml={5} />
              </ToolRow>
            </StackCol>
            <SmallCol $ml={3}>
              <SmallRow $dim><RowIcon><TextDir /></RowIcon>文字方向<Caret $dim $ml={5} /></SmallRow>
              <SmallRow $dim><RowIcon><TextAlign /></RowIcon>对齐文本<Caret $dim $ml={5} /></SmallRow>
              <SmallRow $dim><RowIcon><SmartArtIco /></RowIcon>转换为 SmartArt<Caret $dim $ml={4} /></SmallRow>
            </SmallCol>
          </GroupBody>
          <GroupFooter><GroupLabel>段落</GroupLabel><Launcher><Launch c="#b5b5b5" /></Launcher></GroupFooter>
        </Group>

        <Group $w={472}>
          <GroupBody $pl={4}>
            <Gallery>
              <GalleryGrid>{shapes}</GalleryGrid>
              <GalleryScroll>
                <GalleryBtn $on $h={31}><UpTri /></GalleryBtn>
                <GalleryBtn $h={28}><Caret /></GalleryBtn>
                <GalleryBtn $h={31}>
                  <StackedLetter><Svg w={8} h={2}><rect width="8" height="1" fill="#666" /></Svg><Caret /></StackedLetter>
                </GalleryBtn>
              </GalleryScroll>
            </Gallery>
            <BigButton $w={62}>
              <BigIcon><Arrange /></BigIcon>
              <BigLine>排列</BigLine>
              <BigLine><Caret /></BigLine>
            </BigButton>
            <BigButton $w={75} $dim>
              <BigIcon><QuickStyle /></BigIcon>
              <BigLine>快速样式</BigLine>
              <BigLine><Caret $dim /></BigLine>
            </BigButton>
            <SmallCol $ml={4} $mt={-2}>
              <SmallRow $dim $h={31.5}><RowIcon><Bucket /></RowIcon>形状填充<Caret $dim $ml={4} /></SmallRow>
              <SmallRow $dim $h={31.5}><RowIcon><PenBox /></RowIcon>形状轮廓<Caret $dim $ml={4} /></SmallRow>
              <SmallRow $dim $h={31.5}><RowIcon><EffectIco /></RowIcon>形状效果<Caret $dim $ml={4} /></SmallRow>
            </SmallCol>
          </GroupBody>
          <GroupFooter><GroupLabel>绘图</GroupLabel><Launcher><Launch c="#b5b5b5" /></Launcher></GroupFooter>
        </Group>

        <Group $w={97}>
          <GroupBody $pl={10}>
            <SmallCol $mt={-2}>
              <SmallRow $h={31.5}><RowIcon $w={20} $gap={4}><Find /></RowIcon>查找</SmallRow>
              <SmallRow $h={31.5}><RowIcon $w={20} $gap={4}><Replace /></RowIcon>替换<Caret $ml={10} /></SmallRow>
              <SmallRow $h={31.5}><RowIcon $w={20} $gap={4}><Select /></RowIcon>选择<Caret $ml={6} /></SmallRow>
            </SmallCol>
          </GroupBody>
          <GroupFooter><GroupLabel>编辑</GroupLabel></GroupFooter>
        </Group>
      </Ribbon>

      <ToolBar>
        {tools.map((t, i) => (
          <ToolSlot key={t.x} $up={t.up} $w={(tools[i + 1]?.x ?? t.x + 40) - t.x}>
            <ToolIcon>{t.icon}</ToolIcon>
            {t.caret && <Caret $ml={4} $dim={t.caret === "dim"} />}
          </ToolSlot>
        ))}
      </ToolBar>

      <Main>
        <ThumbPanel>
          <ThumbList>
            {thumbs.map((t) => (
              <ThumbRow key={t.n}>
                <ThumbNum $active={t.active}>{t.n}</ThumbNum>
                <Thumb $active={t.active}>{t.art}</Thumb>
              </ThumbRow>
            ))}
          </ThumbList>
          <Scroll>
            <ScrollBtn $h={24}><TriUp /></ScrollBtn>
            <ScrollTrack />
            <ScrollThumb />
            <ScrollGap />
            <ScrollBtn $h={16}><TriDown /></ScrollBtn>
          </Scroll>
        </ThumbPanel>
        <Canvas><Slide /></Canvas>
        <Rail>
          <RailBox $h={24} />
          <RailTrack $h={402} />
          <RailBox $h={25} $dark />
          <RailTrack $h={98} />
          <RailBox $h={25} />
          <RailTrack $empty />
        </Rail>
      </Main>

      <Cursor width="20" height="30" viewBox="0 0 20 30">
        <path d="M1.5 1v21l5.5-5 4.5 11 3.5-1.5-4.5-10.5h8z" fill="#fff" stroke="#222" strokeWidth="1" />
      </Cursor>
    </Page>
  );
}
